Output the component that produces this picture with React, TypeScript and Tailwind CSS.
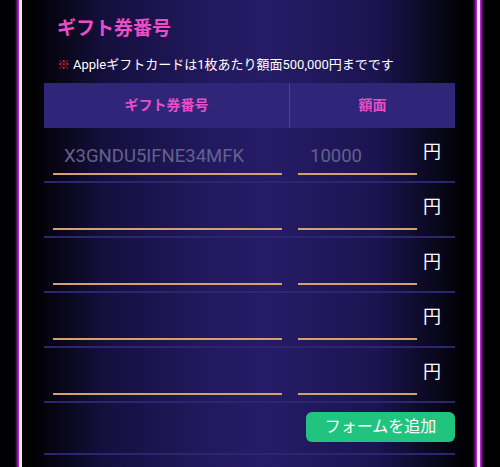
import { useState } from 'react';

// ギフト券入力フォーム
const FONT = "[font-family:Roboto,'Noto_Sans_CJK_JP',sans-serif]";

type Row = { code: string; amount: string };

function NeonLine() {
  return (
    <div className="w-[3px] shrink-0 bg-[#fbe6ff] shadow-[0_0_3px_2px_#c92ee8]"></div>
  );
}

export default function App() {
  const [rows, setRows] = useState<Row[]>(
    Array.from({ length: 5 }, () => ({ code: '', amount: '' }))
  );

  const update = (i: number, key: keyof Row, value: string) => {
    setRows((prev) => prev.map((r, idx) => (idx === i ? { ...r, [key]: value } : r)));
  };

  return (
    <div className={`w-[500px] h-[467px] bg-black flex overflow-hidden ${FONT}`}>
      <div className="w-[19px] shrink-0"></div>
      <NeonLine />
      <div className="flex-1 bg-[linear-gradient(to_right,#000_2%,#150f3d_18%,#231960_42%,#261b66_55%,#1b1450_78%,#000_98%)] px-[22px] pt-[15px]">
        {/* Title */}
        <h2 className="ml-[13px] text-[19px] leading-[28px] font-bold text-[#e84fc6]">
          ギフト券番号
        </h2>

        {/* Note */}
        <p className="ml-[13px] mt-[12px] text-[13px] leading-[20px] text-white">
          <span className="text-[#d4202c] mr-[3px]">※</span>
          Appleギフトカードは1枚あたり額面500,000円までです
        </p>

        {/* Table */}
        <div className="mt-[8px]">
          <div className="flex h-[45px] bg-[#2f2579] text-[14px] font-bold text-[#e84fc6]">
            <div className="w-[246px] flex items-center justify-center border-r border-[#4a41a3]">
              ギフト券番号
            </div>
            <div className="flex-1 flex items-center justify-center">額面</div>
          </div>

          {rows.map((row, i) => (
            <div key={i} className="flex h-[55px] items-end pb-[6px] border-b-2 border-[#2c2670]">
              <div className="w-[246px] pl-[9px] pr-[8px]">
                <input
                  value={row.code}
                  onChange={(e) => update(i, 'code', e.target.value)}
                  placeholder={i === 0 ? 'X3GNDU5IFNE34MFK' : ''}
                  className="w-full h-[36px] bg-transparent border-b-2 border-[#d6a26b] px-[11px] text-[18.5px] text-white placeholder:text-[#64618e] outline-none"
                />
              </div>
              <div className="flex-1 flex items-end pl-[8px]">
                <input
                  value={row.amount}
                  onChange={(e) => update(i, 'amount', e.target.value)}
                  placeholder={i === 0 ? '10000' : ''}
                  className="w-[119px] h-[36px] bg-transparent border-b-2 border-[#d6a26b] px-[12px] text-[18.5px] text-white placeholder:text-[#64618e] outline-none"
                />
                <span className="ml-[6px] mb-[11px] text-[18px] leading-[24px] text-white">円</span>
              </div>
            </div>
          ))}

          <div className="flex justify-end h-[52px] pt-[9px] border-b-2 border-[#2c2670]">
            <button
              onClick={() => setRows((prev) => [...prev, { code: '', amount: '' }])}
              className="w-[149px] h-[30px] rounded-[6px] bg-[#20c47e] text-[16px] text-white"
            >
              フォームを追加
            </button>
          </div>
        </div>
      </div>
      <NeonLine />
      <div className="w-[20px] shrink-0"></div>
    </div>
  );
}
